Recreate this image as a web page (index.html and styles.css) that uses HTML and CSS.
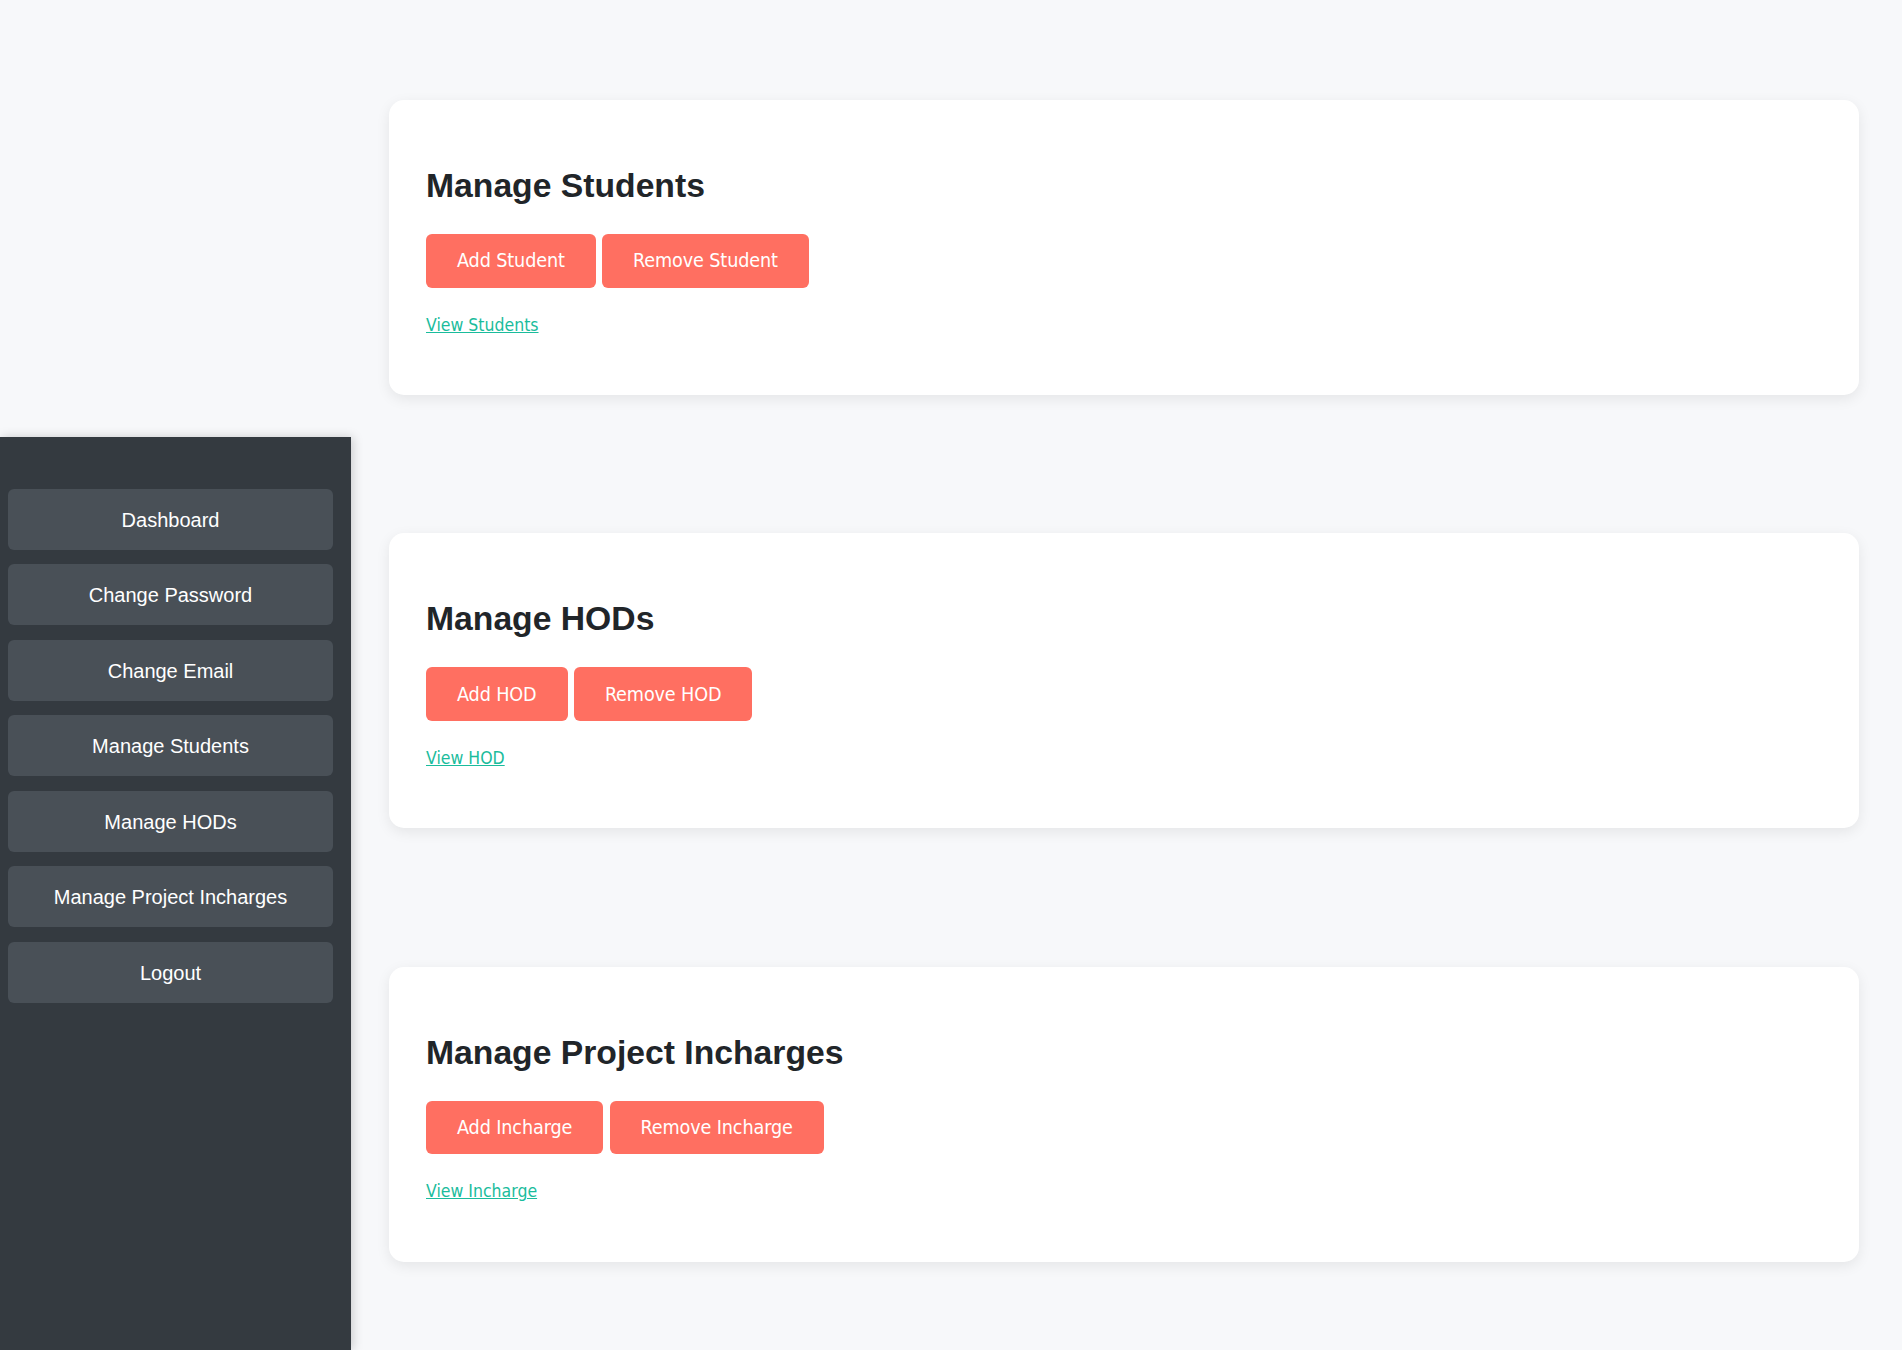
FILE: index.html
```html
<!DOCTYPE html>
<html lang="en">
<head>
<meta charset="utf-8">
<title>Admin Dashboard</title>
<link rel="stylesheet" href="styles.css">
</head>
<body>
<div class="layout">
  <aside class="sidebar">
    <nav class="side-nav">
      <a class="side-btn" href="#">Dashboard</a>
      <a class="side-btn" href="#">Change Password</a>
      <a class="side-btn" href="#">Change Email</a>
      <a class="side-btn" href="#">Manage Students</a>
      <a class="side-btn" href="#">Manage HODs</a>
      <a class="side-btn" href="#">Manage Project Incharges</a>
      <a class="side-btn" href="#">Logout</a>
    </nav>
  </aside>
  <main class="content">
    <section class="card">
      <h2 class="card-title">Manage Students</h2>
      <div class="actions">
        <button class="action-btn">Add Student</button>
        <button class="action-btn">Remove Student</button>
      </div>
      <a class="view-link" href="#">View Students</a>
    </section>
    <section class="card">
      <h2 class="card-title">Manage HODs</h2>
      <div class="actions">
        <button class="action-btn">Add HOD</button>
        <button class="action-btn">Remove HOD</button>
      </div>
      <a class="view-link" href="#">View HOD</a>
    </section>
    <section class="card">
      <h2 class="card-title">Manage Project Incharges</h2>
      <div class="actions">
        <button class="action-btn">Add Incharge</button>
        <button class="action-btn">Remove Incharge</button>
      </div>
      <a class="view-link" href="#">View Incharge</a>
    </section>
  </main>
</div>
</body>
</html>
```
FILE: styles.css
```css
html, body {
  margin: 0;
  padding: 0;
}

body {
  background: #f7f8fa;
  font-family: "Liberation Sans", Arial, sans-serif;
  color: #212529;
}

.layout {
  display: flex;
  min-height: 1350px;
}

.sidebar {
  width: 351px;
  flex: 0 0 351px;
  margin-top: 437px;
  background: #343a40;
  box-shadow: 2px 0 10px rgba(0, 0, 0, 0.18);
  box-sizing: border-box;
  padding: 52px 18px 0 8px;
}

.side-nav {
  display: flex;
  flex-direction: column;
  gap: 14.7px;
}

.side-btn {
  display: flex;
  align-items: center;
  justify-content: center;
  height: 60.8px;
  box-sizing: border-box;
  padding-top: 2px;
  background: #495057;
  border-radius: 6px;
  color: #ffffff;
  text-decoration: none;
  font-size: 20px;
}

.content {
  flex: 1;
  padding: 100px 43px 88px 37.5px;
  display: flex;
  flex-direction: column;
  gap: 138.3px;
}

.card {
  background: #ffffff;
  border-radius: 15px;
  box-shadow: 0 4px 14px rgba(0, 0, 0, 0.08);
  height: 295px;
  box-sizing: border-box;
  padding: 65px 37.5px 0 37.5px;
  display: flex;
  flex-direction: column;
  align-items: flex-start;
}

.card-title {
  margin: 0;
  font-size: 33.7px;
  line-height: 40px;
  font-weight: bold;
  color: #212529;
}

.actions {
  display: flex;
  gap: 6.3px;
  margin-top: 29px;
}

.action-btn {
  height: 53.5px;
  padding: 0 31px;
  border: none;
  border-radius: 6px;
  background: #ff6f61;
  color: #ffffff;
  font-family: "DejaVu Sans Condensed", "DejaVu Sans", sans-serif;
  font-stretch: condensed;
  font-size: 19.6px;
  letter-spacing: -0.12px;
  cursor: pointer;
}

.view-link {
  margin-top: 27px;
  font-family: "DejaVu Sans Condensed", "DejaVu Sans", sans-serif;
  font-stretch: condensed;
  font-size: 17.5px;
  line-height: 21px;
  color: #1abc9c;
  text-decoration: underline;
}
```
